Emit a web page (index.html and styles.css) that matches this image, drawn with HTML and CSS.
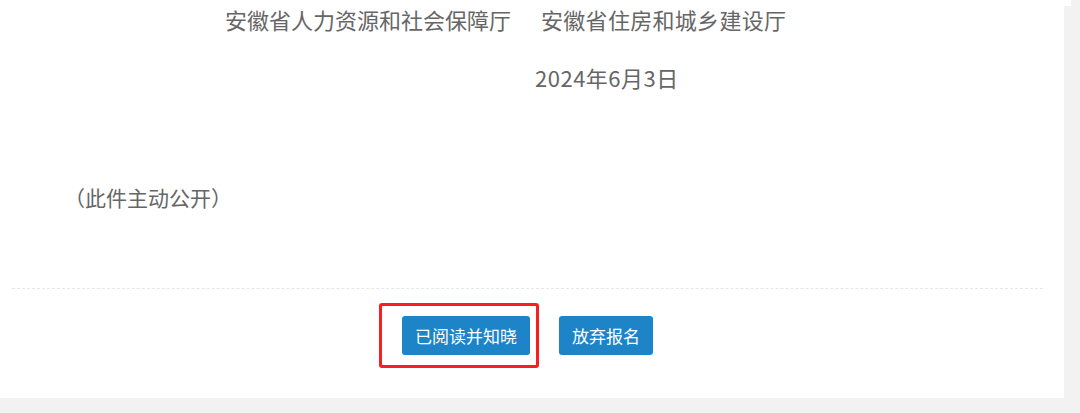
FILE: index.html
```html
<!DOCTYPE html>
<html lang="zh-CN">
<head>
  <meta charset="UTF-8" />
  <meta name="viewport" content="width=device-width, initial-scale=1.0" />
  <title>报名须知</title>
  <link rel="stylesheet" href="styles.css">
</head>
<body>

  <div class="top-strip"></div>

  <div class="panel">
    <div class="notice">
      <p class="sign">
        <span>安徽省人力资源和社会保障厅</span><span class="sign-second">安徽省住房和城乡建设厅</span>
      </p>
      <p class="date">2024年6月3日</p>
      <p class="public">（此件主动公开）</p>
    </div>

    <div class="actions">
      <div class="confirm-wrap">
        <button class="btn">已阅读并知晓</button>
        <div class="mark"></div>
      </div>
      <button class="btn">放弃报名</button>
    </div>
  </div>

</body>
</html>
```

FILE: styles.css
```css
    body {
      margin: 0;
      background-color: #f2f2f2;
      font-family: "Noto Sans CJK SC", "Noto Sans", sans-serif;
    }

    .top-strip {
      width: 1071px;
      height: 6px;
      background-color: #fff;
    }

    .panel {
      width: 1064px;
      height: 392px;
      background-color: #fff;
      padding: 0 21px 0 12px;
      box-sizing: border-box;
      display: flex;
      flex-direction: column;
    }

    .notice {
      border-bottom: 1px dashed #e6e6e6;
      padding-bottom: 78px;
    }

    .notice p {
      margin: 0;
      color: #666;
      font-size: 22px;
      line-height: 26px;
    }

    .sign {
      padding-left: 213px;
    }

    .sign-second {
      margin-left: 30px;
      letter-spacing: 0.3px;
    }

    .date {
      margin-top: 32px !important;
      padding-left: 523px;
      letter-spacing: 0.5px;
    }

    .public {
      margin-top: 94px !important;
      padding-left: 52px;
      font-size: 21px !important;
    }

    .actions {
      display: flex;
      justify-content: center;
      gap: 29px;
      padding-top: 27px;
    }

    .confirm-wrap {
      position: relative;
    }

    .btn {
      background-color: #1e84c8;
      color: #fff;
      border: none;
      border-radius: 3px;
      height: 39px;
      padding: 0 13px;
      font-family: inherit;
      font-size: 17px;
      line-height: 39px;
      cursor: pointer;
      display: block;
    }

    .mark {
      position: absolute;
      top: -13px;
      bottom: -13px;
      left: -23px;
      right: -9px;
      border: 3px solid #fa1e1e;
      border-radius: 3px;
      pointer-events: none;
    }
```
